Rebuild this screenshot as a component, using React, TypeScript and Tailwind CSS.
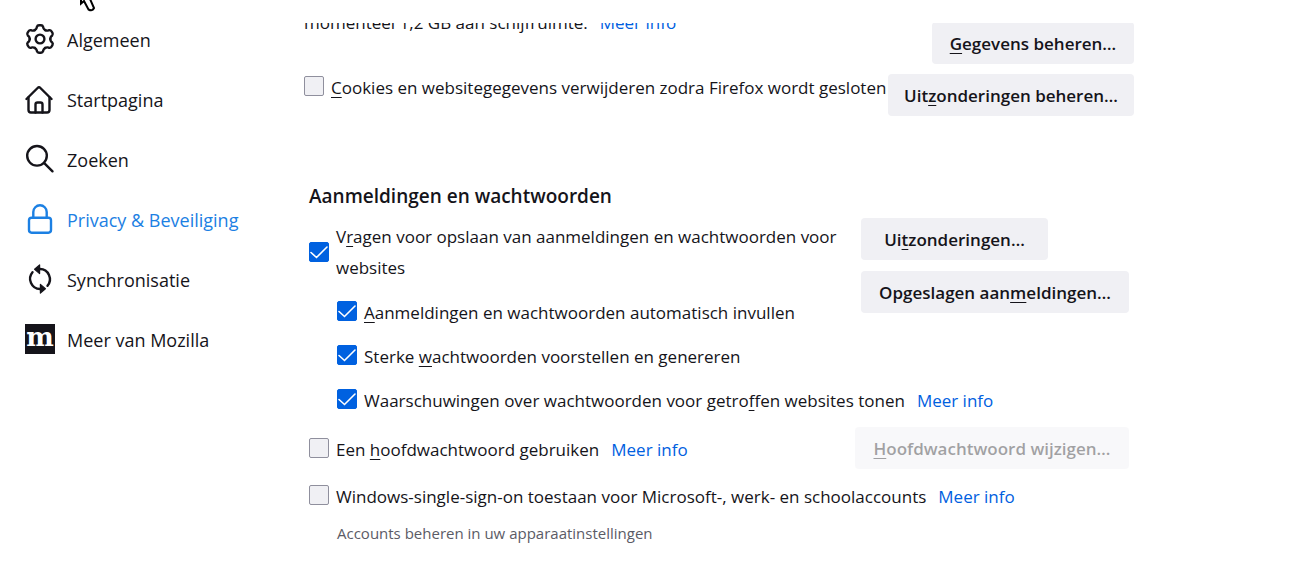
import type { ReactNode } from "react"
import clsx from "clsx"

type CheckRowProps = {
  id: string
  checked?: boolean
  className?: string
  children: ReactNode
}

function CheckRow({ id, checked, className, children }: CheckRowProps) {
  return (
    <label htmlFor={id} className={clsx("flex gap-[7px]", className ?? "items-start")}>
      <span className="grid size-5 shrink-0">
        <input
          id={id}
          type="checkbox"
          defaultChecked={checked}
          className="peer col-start-1 row-start-1 size-5 appearance-none rounded-xs border border-[#8f8f9d] bg-[#f0f0f4] checked:border-[#0061e0] checked:bg-[#0061e0]"
        />
        <svg
          viewBox="0 0 20 20"
          className="pointer-events-none col-start-1 row-start-1 hidden size-5 peer-checked:block"
          fill="none"
          stroke="white"
          strokeWidth="1.6"
          strokeLinecap="round"
        >
          <path d="M2 10.5 7.5 15.5 18 5" />
        </svg>
      </span>
      <span>{children}</span>
    </label>
  )
}

function Key({ children }: { children: ReactNode }) {
  return <span className="underline underline-offset-3">{children}</span>
}

function MoreInfo() {
  return (
    <a href="#info" className="ml-3 text-[#0060df]">
      Meer info
    </a>
  )
}

type ButtonProps = {
  disabled?: boolean
  className?: string
  children: ReactNode
}

function Button({ disabled, className, children }: ButtonProps) {
  return (
    <button
      type="button"
      disabled={disabled}
      className={clsx(
        "h-[42px] shrink-0 rounded bg-[#f0f0f4] pt-0.5 text-center font-semibold disabled:opacity-40",
        className
      )}
    >
      {children}
    </button>
  )
}

const teeth = [0, 60, 120, 180, 240, 300]

function GearIcon() {
  return (
    <svg viewBox="-15 -15 30 30" className="size-[30px]" fill="none" stroke="currentColor" strokeWidth="2.4">
      {teeth.map((angle) => (
        <path
          key={angle}
          transform={`rotate(${angle})`}
          strokeLinecap="round"
          d="M-5.15-8.92Q-3.7-9.8-3.4-11L-3.1-12.2Q-2.6-13.8-1-13.8H1Q2.6-13.8 3.1-12.2L3.4-11Q3.7-9.8 5.15-8.92"
        />
      ))}
      <circle r="4.4" />
    </svg>
  )
}

function HomeIcon() {
  return (
    <svg
      viewBox="0 0 30 30"
      className="size-[30px]"
      fill="none"
      stroke="currentColor"
      strokeWidth="2.4"
      strokeLinecap="round"
      strokeLinejoin="round"
    >
      <path d="M1.5 15 12.6 4Q14 2.6 15.4 4L26.5 15" />
      <path d="M3.5 13.5V26Q3.5 28.5 6 28.5H22Q24.5 28.5 24.5 26V13.5" />
      <path d="M10.5 28.5V20.5Q10.5 18.5 12.5 18.5H15.5Q17.5 18.5 17.5 20.5V28.5" />
    </svg>
  )
}

function SearchIcon() {
  return (
    <svg viewBox="0 0 30 30" className="size-[30px]" fill="none" stroke="currentColor" strokeWidth="2.4" strokeLinecap="round">
      <circle cx="12" cy="11.8" r="9.8" />
      <path d="M19 18.8 27.5 27.3" />
    </svg>
  )
}

function LockIcon() {
  return (
    <svg viewBox="0 0 30 30" className="size-[30px]" fill="none" stroke="currentColor" strokeWidth="2.4">
      <rect x="4" y="13.7" width="22" height="15" rx="2.6" />
      <path d="M8.3 13.7V8a6.7 6.7 0 0 1 13.4 0V13.7" />
    </svg>
  )
}

function SyncIcon() {
  return (
    <svg viewBox="0 0 30 30" className="size-[30px]" fill="none" stroke="currentColor" strokeWidth="2.4" strokeLinecap="round">
      <path d="M7.5 8.2A10 10.2 0 0 0 15 25" />
      <path d="M22.5 21.8A10 10.2 0 0 0 15 5" />
      <path
        d="M9.6 5.2 14.6.9V9.6ZM20.4 24.8 15.4 29.1V20.4Z"
        fill="currentColor"
        strokeWidth="1.2"
        strokeLinejoin="round"
      />
    </svg>
  )
}

function MozillaIcon() {
  return (
    <span className="flex size-[30px] items-center justify-center bg-[#15141a] pb-1 font-['DejaVu_Serif',serif] text-[26px] leading-[30px] font-bold text-white">
      m
    </span>
  )
}

const navItems = [
  { label: "Algemeen", icon: <GearIcon /> },
  { label: "Startpagina", icon: <HomeIcon /> },
  { label: "Zoeken", icon: <SearchIcon /> },
  { label: "Privacy & Beveiliging", icon: <LockIcon />, active: true },
  { label: "Synchronisatie", icon: <SyncIcon /> },
  { label: "Meer van Mozilla", icon: <MozillaIcon /> },
]

export default function App() {
  return (
    <div className="relative flex min-h-screen overflow-hidden bg-white font-['Open_Sans','Noto_Sans',sans-serif] text-[17px] leading-6 text-[#15141a] [font-variant-ligatures:none]">
      <nav className="w-76 shrink-0 pt-[9px] pl-[25px] text-lg">
        {navItems.map((item) => (
          <a
            key={item.label}
            href="#"
            className={clsx("flex h-15 items-center gap-3", item.active && "text-[#1c80e3]")}
          >
            {item.icon}
            <span className="pt-0.5">{item.label}</span>
          </a>
        ))}
      </nav>

      <main className="mt-[23px] max-w-[830px] flex-1 overflow-hidden whitespace-nowrap">
        <section>
          <div className="-mt-4 flex items-start justify-between">
            <p className="leading-8">
              momenteel 1,2 GB aan schijfruimte.
              <MoreInfo />
            </p>
            <Button className="mt-[15px] w-[202px]">
              <Key>G</Key>egevens beheren…
            </Button>
          </div>
          <div className="mt-2.5 flex items-start justify-between">
            <div className="pt-0.5">
              <CheckRow id="clear-cookies">
                <Key>C</Key>ookies en websitegegevens verwijderen zodra Firefox wordt gesloten
              </CheckRow>
            </div>
            <Button className="w-[246px]">
              Uit<Key>z</Key>onderingen beheren…
            </Button>
          </div>
        </section>

        <section className="mt-[66px] px-[5px]">
          <h2 className="text-[19px] leading-7 font-semibold">Aanmeldingen en wachtwoorden</h2>

          <div className="mt-2 flex items-start justify-between">
            <div className="pt-[3px]">
              <CheckRow id="ask-save" checked className="w-[540px] items-center leading-[31px] whitespace-normal">
                V<Key>r</Key>agen voor opslaan van aanmeldingen en wachtwoorden voor websites
              </CheckRow>
              <div className="mt-2 ml-7 flex h-11 items-center">
                <CheckRow id="autofill" checked>
                  <Key>A</Key>anmeldingen en wachtwoorden automatisch invullen
                </CheckRow>
              </div>
            </div>
            <div className="flex w-[268px] flex-col items-start gap-[11px]">
              <Button className="w-[187px]">
                Ui<Key>t</Key>zonderingen…
              </Button>
              <Button className="w-full">
                Opgeslagen aan<Key>m</Key>eldingen…
              </Button>
            </div>
          </div>

          <div className="ml-7 flex h-11 items-center">
            <CheckRow id="suggest" checked>
              Sterke <Key>w</Key>achtwoorden voorstellen en genereren
            </CheckRow>
          </div>
          <div className="ml-7 flex h-11 items-center">
            <CheckRow id="breach" checked>
              Waarschuwingen over wachtwoorden voor getro<Key>f</Key>fen websites tonen
            </CheckRow>
            <MoreInfo />
          </div>

          <div className="mt-1 flex items-center justify-between">
            <div className="flex pt-1">
              <CheckRow id="primary-password">
                Een <Key>h</Key>oofdwachtwoord gebruiken
              </CheckRow>
              <MoreInfo />
            </div>
            <Button disabled className="w-[274px]">
              <Key>H</Key>oofdwachtwoord wijzigen…
            </Button>
          </div>

          <div className="mt-4 flex">
            <CheckRow id="windows-sso">
              Windows-single-sign-on toestaan voor Microsoft-, werk- en schoolaccounts
            </CheckRow>
            <MoreInfo />
          </div>
          <p className="mt-3 ml-7 text-[15px] text-[#5b5b66]">Accounts beheren in uw apparaatinstellingen</p>
        </section>
      </main>

      <svg viewBox="0 0 20 12" className="absolute top-0 left-[78px] h-3 w-5" fill="white" stroke="black" strokeWidth="2">
        <path d="M3-4V3.5L6 1 10.5 9.5Q14.5 11.5 16 8L12-1" />
      </svg>
    </div>
  )
}
